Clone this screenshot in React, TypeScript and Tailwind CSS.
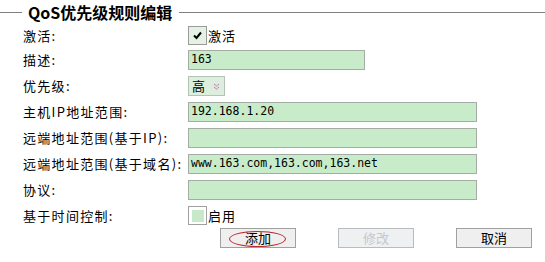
const rows = [
  { label: "主机IP地址范围:", value: "192.168.1.20" },
  { label: "远端地址范围(基于IP):", value: "" },
  { label: "远端地址范围(基于域名):", value: "www.163.com,163.com,163.net" },
  { label: "协议:", value: "" },
];

function Label({ children }: { children: React.ReactNode }) {
  return <div className="w-[188px] shrink-0 pl-[23px] whitespace-nowrap tracking-[1.3px]">{children}</div>;
}

function TextBox({ value, wide = true }: { value: string; wide?: boolean }) {
  return (
    <div
      className={`${wide ? "w-[289px]" : "w-[177px]"} h-[20px] border border-[#a3ada3] bg-[#c8ecca] pl-[2px] flex items-center font-['DejaVu_Sans_Mono',monospace] text-[11.5px] whitespace-nowrap`}
    >
      {value}
    </div>
  );
}

function Btn({ children, disabled, circled }: { children: React.ReactNode; disabled?: boolean; circled?: boolean }) {
  return (
    <div
      className={`relative w-[76px] h-[20px] border flex items-center justify-center text-[13px] ${
        disabled ? "border-[#b8bcc0] bg-[#eef0f2] text-[#c4c8cc]" : "border-[#a0a0a0] bg-[#efefef] text-black"
      }`}
    >
      {children}
      {circled && (
        <div className="absolute left-[8px] top-[2px] w-[57px] h-[16px] rounded-[50%] border border-[#b8282e]" />
      )}
    </div>
  );
}

export default function App() {
  return (
    <div className="w-[545px] h-[262px] bg-white text-black text-[13px] font-['Noto_Sans_CJK_SC','Noto_Sans',sans-serif] overflow-hidden">
      <div className="h-[24px] flex items-center">
        <div className="w-[22px] h-px bg-[#808080]" />
        <div className="pl-[6px] pr-[7px] font-bold text-[16px] leading-none whitespace-nowrap">QoS优先级规则编辑</div>
        <div className="flex-1 h-px bg-[#808080]" />
      </div>

      <div className="flex flex-col">
        <div className="h-[23px] flex items-center">
          <Label>激活:</Label>
          <div className="w-[19px] h-[19px] border border-[#9a9a9a] bg-[#e4f2e4] flex items-center justify-center">
            <svg width="11" height="11" viewBox="0 0 11 11">
              <path d="M2 5.5 L4.5 8 L9 2.5" fill="none" stroke="black" strokeWidth="2" />
            </svg>
          </div>
          <span className="ml-[1px] tracking-[1px]">激活</span>
        </div>

        <div className="h-[26px] flex items-center">
          <Label>描述:</Label>
          <TextBox value="163" wide={false} />
        </div>

        <div className="h-[26px] flex items-center">
          <Label>优先级:</Label>
          <div className="w-[37px] h-[20px] border border-[#b4c4b4] bg-[#dcefdc] flex items-center pl-[3px] gap-[6px]">
            <span>高</span>
            <div className="w-[11px] h-[11px] rounded-full bg-[#e6e6e6] flex items-center justify-center">
              <svg width="7" height="7" viewBox="0 0 7 7">
                <path d="M1 1 L3.5 3 L6 1 M1 4 L3.5 6 L6 4" fill="none" stroke="#9a9a9a" strokeWidth="1" />
              </svg>
            </div>
          </div>
        </div>

        {rows.map((r) => (
          <div key={r.label} className="h-[26px] flex items-center">
            <Label>{r.label}</Label>
            <TextBox value={r.value} />
          </div>
        ))}

        <div className="h-[25px] flex items-center">
          <Label>基于时间控制:</Label>
          <div className="w-[19px] h-[19px] border border-[#a0a0a0] bg-white flex items-center justify-center">
            <div className="w-[12px] h-[12px] bg-[#c8e8ca]" />
          </div>
          <span className="ml-[1px] tracking-[1px]">启用</span>
        </div>

        <div className="flex gap-[42px] pl-[220px]">
          <Btn circled>添加</Btn>
          <Btn disabled>修改</Btn>
          <Btn>取消</Btn>
        </div>
      </div>
    </div>
  );
}
